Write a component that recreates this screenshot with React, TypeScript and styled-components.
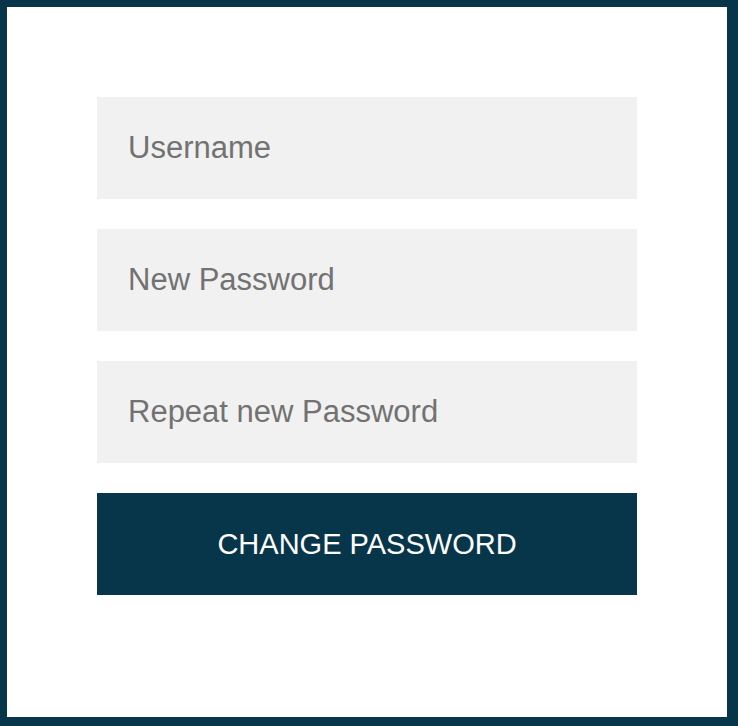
import React from "react";
import styled, { createGlobalStyle } from "styled-components";

const Global = createGlobalStyle`
  html, body { margin: 0; padding: 0; background: #07364a; }
  body { font-family: "Liberation Sans", Arial, sans-serif; }
  * { box-sizing: border-box; }
`;

const Frame = styled.div`
  width: 738px;
  height: 726px;
  padding: 7px 11px 9px 7px;
  background: #07364a;
`;

const Card = styled.form`
  width: 720px;
  height: 710px;
  background: #ffffff;
  padding: 90px;
  display: flex;
  flex-direction: column;
  gap: 30px;
`;

const Field = styled.input`
  display: block;
  width: 540px;
  height: 102px;
  border: none;
  outline: none;
  background: #f1f1f1;
  padding: 0 31px;
  font-family: "Liberation Sans", Arial, sans-serif;
  font-size: 31px;
  color: #727272;
  &::placeholder {
    color: #727272;
    opacity: 1;
  }
`;

const Submit = styled.button`
  width: 540px;
  height: 102px;
  border: none;
  background: #07364a;
  color: #ffffff;
  font-family: "Liberation Sans", Arial, sans-serif;
  font-size: 29px;
  text-transform: uppercase;
  cursor: pointer;
  padding: 0;
`;

export default function App() {
  return (
    <>
      <Global />
      <Frame>
        <Card onSubmit={(e) => e.preventDefault()}>
          <Field type="text" placeholder="Username" />
          <Field type="password" placeholder="New Password" />
          <Field type="password" placeholder="Repeat new Password" />
          <Submit type="submit">Change Password</Submit>
        </Card>
      </Frame>
    </>
  );
}
